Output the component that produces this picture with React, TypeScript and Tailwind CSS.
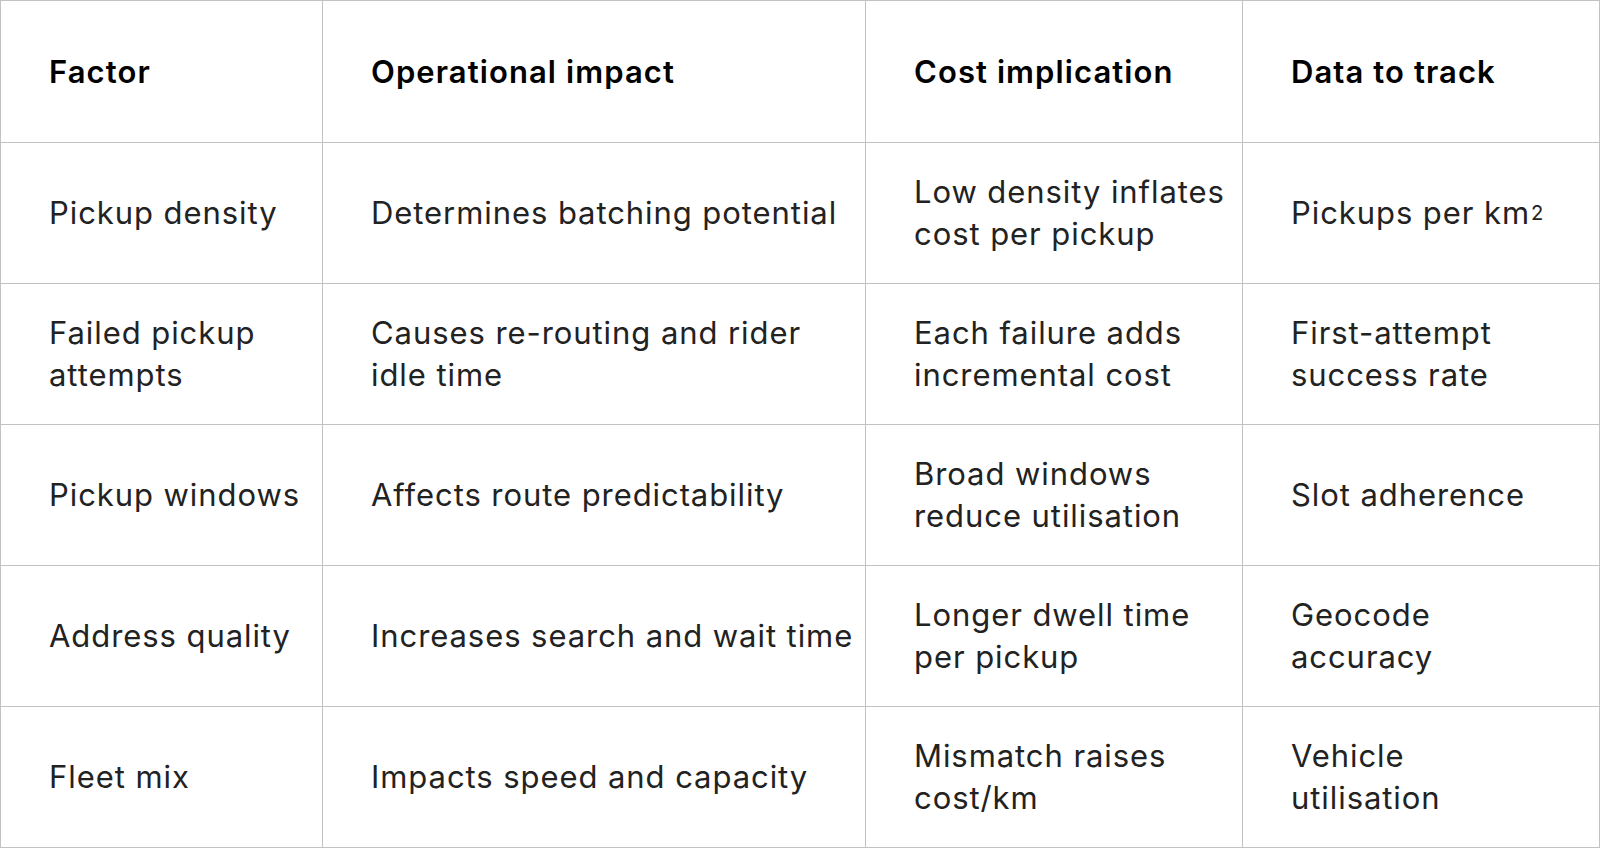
import React from 'react';

const rows: [string, string, string, React.ReactNode][] = [
  ['Pickup density', 'Determines batching potential', 'Low density inflates cost per pickup', <span className="whitespace-nowrap">Pickups per km<sup className="text-[0.65em] ml-[1px] relative -top-[0.2em]">2</sup></span>],
  ['Failed pickup attempts', 'Causes re-routing and rider idle time', 'Each failure adds incremental cost', 'First-attempt success rate'],
  ['Pickup windows', 'Affects route predictability', 'Broad windows reduce utilisation', 'Slot adherence'],
  ['Address quality', 'Increases search and wait time', 'Longer dwell time per pickup', 'Geocode accuracy'],
  ['Fleet mix', 'Impacts speed and capacity', 'Mismatch raises cost/km', 'Vehicle utilisation'],
];

const headers = ['Factor', 'Operational impact', 'Cost implication', 'Data to track'];

// right padding per column, tuned so the lines wrap where the design wraps
const padRight = ['pr-4', 'pr-[8px]', 'pr-4', 'pr-[56px]'];

export default function App() {
  return (
    <div className="w-[1600px] h-[849px] bg-white" style={{ fontFamily: 'Inter, "Noto Sans", sans-serif' }}>
      <table className="w-full table-fixed border-collapse">
        <colgroup>
          <col className="w-[322px]" />
          <col className="w-[543px]" />
          <col className="w-[377px]" />
          <col />
        </colgroup>
        <thead>
          <tr className="h-[142px]">
            {headers.map((h, i) => (
              <th key={h} className={`border border-[#c2c2c2] pl-[48px] ${padRight[i]} text-left align-middle text-[31px] leading-[42px] font-semibold text-black tracking-[0.035em]`}>
                {h}
              </th>
            ))}
          </tr>
        </thead>
        <tbody>
          {rows.map(r => (
            <tr key={r[0]} className="h-[141px]">
              {r.map((c, i) => (
                <td key={i} className={`border border-[#c2c2c2] pl-[48px] ${padRight[i]} align-middle text-[31px] leading-[42px] font-normal text-[#222] tracking-[0.03em]`}>
                  {c}
                </td>
              ))}
            </tr>
          ))}
        </tbody>
      </table>
    </div>
  );
}
